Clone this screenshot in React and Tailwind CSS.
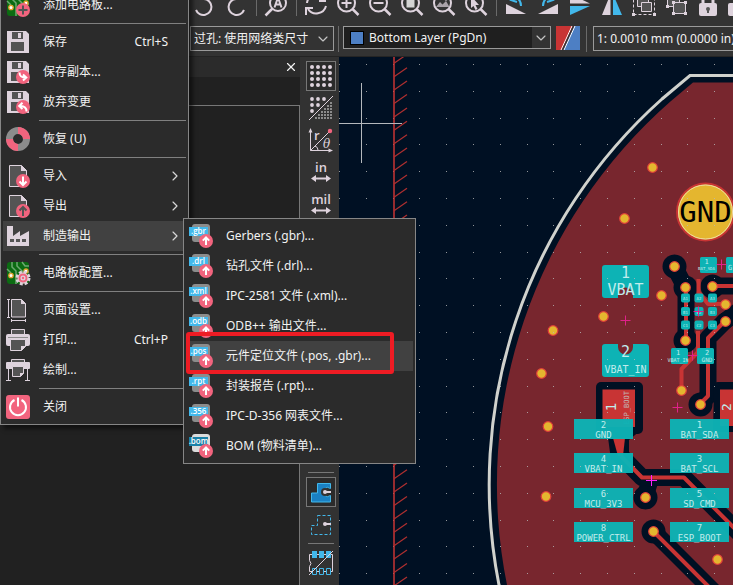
import { ChevronDown, ChevronRight, X } from "lucide-react";

const LIGHT = "#ded3dd";
const PINK = "#f2647e";
const BLUE = "#42b8eb";
const GREY = "#545454";

function Icon({ children }) {
  return (
    <svg width="24" height="24" viewBox="0 0 24 24" fill="none" className="shrink-0 overflow-visible" aria-hidden="true">
      {children}
    </svg>
  );
}

/* ---------- menu icons ---------- */

function Badge({ kind }) {
  const paths = {
    plus: "M17 12.5v9M12.5 17h9",
    up: "M17 21v-7M13.8 16.6l3.2-3.2 3.2 3.2",
    saveAs: "M13.5 12.5c0 4 2 5 6.5 5M17 14.5l3.3 3-3.3 3",
    revert: "M20.5 21.5c0-4-2-5.5-6-5.5M16.5 12.7l-3.3 3.3 3.3 3",
  };
  return (
    <>
      <circle cx="17" cy="17" r="7" fill={PINK} />
      <path d={paths[kind]} stroke={kind === "plus" ? GREY : "#fff"} strokeWidth="2" />
    </>
  );
}

function BoardBase() {
  return (
    <>
      <rect x="1" y="1" width="22" height="22" rx="3" fill="#0b6b12" />
      <path d="M6 1v5l4 4v13M11 1v4l6 6h6M1 8l4 4M16 1l3 4h4" stroke="#6da871" strokeWidth="1.5" />
      <circle cx="5" cy="14.5" r="2.2" fill="#fff" stroke="#e0a22d" strokeWidth="1.3" />
      <circle cx="20" cy="10" r="2" fill="#fff" stroke="#e0a22d" strokeWidth="1.3" />
    </>
  );
}

function FloppyIcon({ badge }) {
  return (
    <Icon>
      <path d="M1 1h19l3 3v19H1z" fill={LIGHT} />
      <path d="M6 2h11v7H6z" fill={GREY} />
      <path d="M12 3h3v5h-3z" fill={LIGHT} />
      <path d="M5 12h13v9H5z" fill={GREY} />
      {badge && <Badge kind={badge} />}
    </Icon>
  );
}

function PageIcon({ up }) {
  return (
    <Icon>
      <path d="M3.5 1.5h12l5 5v16h-17z" fill={GREY} stroke={LIGHT} />
      <path d="M15 1v6h6z" fill={LIGHT} />
      <circle cx="17" cy="17" r="7" fill={PINK} />
      <path
        d={up ? "M17 22v-8M13.5 16.5l3.5-3.5 3.5 3.5" : "M17 12.5v8M13.5 17.5l3.5 3.5 3.5-3.5"}
        stroke={up ? GREY : "#fff"}
        strokeWidth="2"
      />
    </Icon>
  );
}

const AddBoardIcon = () => (
  <Icon>
    <BoardBase />
    <Badge kind="plus" />
  </Icon>
);

const LifebuoyIcon = () => (
  <Icon>
    <circle cx="12" cy="12" r="8.5" stroke="#8c8c8c" strokeWidth="7" />
    <path d="M12 3.5a8.5 8.5 0 0 1 8.5 8.5M12 20.5a8.5 8.5 0 0 1-8.5-8.5" stroke={PINK} strokeWidth="7" />
  </Icon>
);

const FactoryIcon = () => (
  <Icon>
    <path d="M1 2h6v10l7-5v5l9-5v15H1z" fill={LIGHT} />
    <path d="M4 15h4v3H4zM10 15h4v3h-4zM16 15h4v3h-4z" fill={GREY} />
  </Icon>
);

const BoardSetupIcon = () => (
  <Icon>
    <BoardBase />
    <circle cx="17" cy="17" r="5.5" fill={PINK} stroke={LIGHT} strokeWidth="4" strokeDasharray="2.6 1.72" />
    <circle cx="17" cy="17" r="5" fill={PINK} stroke={LIGHT} />
    <circle cx="17" cy="17" r="2.5" fill={LIGHT} />
    <circle cx="17" cy="17" r="1.2" fill={PINK} />
  </Icon>
);

const PageSetupIcon = () => (
  <Icon>
    <path d="M5.5 1.5h10l4 4v13.5h-14z" fill={GREY} stroke={LIGHT} />
    <path d="M15 1v5h5z" fill={LIGHT} />
    <path d="M2.5 1.5v18M1 1.5h3M1 19.5h3M5.5 22.5h14M5.5 21v3M19.5 21v3" stroke={LIGHT} />
  </Icon>
);

const PrintIcon = () => (
  <Icon>
    <path d="M5.5 1.5h13v5h-13z" fill={GREY} stroke={LIGHT} />
    <rect y="6" width="24" height="12" rx="2" fill={LIGHT} />
    <path d="M2 9.5h20" stroke="#8c8c8c" />
    <path d="M4.5 11.5h15v7l-4 4h-11z" fill={GREY} stroke={LIGHT} />
    <path d="M15 23v-5h5z" fill={LIGHT} />
  </Icon>
);

const PlotIcon = () => (
  <Icon>
    <path d="M5.5 1.5h13v3h-13z" fill={GREY} stroke={LIGHT} />
    <rect y="4" width="24" height="7" rx="1" fill={LIGHT} />
    <path d="M2.5 11v11M21.5 11v11M0 22.5h5M19 22.5h5" stroke={LIGHT} />
    <path d="M6.5 8.5h11v7l-3 3h-8z" fill={GREY} stroke={LIGHT} />
    <path d="M14 19v-4h4z" fill={LIGHT} />
  </Icon>
);

const PowerIcon = () => (
  <Icon>
    <rect width="24" height="24" rx="3" fill={PINK} />
    <path d="M8.5 5A8 8 0 1 0 15.5 5M12 2.5v9" stroke="#fff" strokeWidth="2" />
  </Icon>
);

function FileTypeIcon({ ext, bom }) {
  return (
    <Icon>
      <rect x="3" width="18" height="18" rx="3" fill={bom ? "#dcdcdc" : "#8c8c8c"} />
      <rect y="3" width="19" height="9" fill={bom ? "#1a81a8" : BLUE} />
      <text x="9.5" y="10" textAnchor="middle" fill="#fff" fontSize="8" fontWeight="600" fontFamily="Open Sans, sans-serif">
        {ext}
      </text>
      <Badge kind="up" />
    </Icon>
  );
}

/* ---------- menus ---------- */

function MenuItem({ icon, label, shortcut, submenu, active, children }) {
  return (
    <li role="none" className="relative">
      <button
        type="button"
        role="menuitem"
        className={`flex h-[30px] w-full items-center gap-[13px] pl-[3px] text-left whitespace-nowrap ${
          active ? "bg-[#414141]" : ""
        }`}
      >
        {icon}
        <span className="flex-1">{label}</span>
        {shortcut && <span className="mr-[18px]">{shortcut}</span>}
        {submenu && <ChevronRight className="mr-[3px] size-4 text-[#d8d8d8]" strokeWidth={1.75} />}
      </button>
      {children}
    </li>
  );
}

const Separator = () => <li role="separator" className="my-[3px] ml-9 h-px bg-[#808080]" />;

function FileMenu() {
  return (
    <ul
      role="menu"
      aria-label="文件"
      className="absolute -top-[10px] left-0 w-[189px] border border-t-0 border-[#868686] bg-[#2b2b2b] px-[2px] pb-[2px] shadow-[4px_4px_4px_rgba(0,0,0,0.5)]"
    >
      <MenuItem icon={<AddBoardIcon />} label="添加电路板..." />
      <Separator />
      <MenuItem icon={<FloppyIcon />} label="保存" shortcut="Ctrl+S" />
      <MenuItem icon={<FloppyIcon badge="saveAs" />} label="保存副本..." />
      <MenuItem icon={<FloppyIcon badge="revert" />} label="放弃变更" />
      <Separator />
      <MenuItem icon={<LifebuoyIcon />} label="恢复 (U)" />
      <Separator />
      <MenuItem icon={<PageIcon />} label="导入" submenu />
      <MenuItem icon={<PageIcon up />} label="导出" submenu />
      <MenuItem icon={<FactoryIcon />} label="制造输出" submenu active />
      <Separator />
      <MenuItem icon={<BoardSetupIcon />} label="电路板配置..." />
      <Separator />
      <MenuItem icon={<PageSetupIcon />} label="页面设置..." />
      <MenuItem icon={<PrintIcon />} label="打印..." shortcut="Ctrl+P" />
      <MenuItem icon={<PlotIcon />} label="绘制..." />
      <Separator />
      <MenuItem icon={<PowerIcon />} label="关闭" />
    </ul>
  );
}

const OUTPUTS = [
  { ext: ".gbr", label: "Gerbers (.gbr)..." },
  { ext: ".drl", label: "钻孔文件 (.drl)..." },
  { ext: ".xml", label: "IPC-2581 文件 (.xml)..." },
  { ext: ".odb", label: "ODB++ 输出文件..." },
  { ext: ".pos", label: "元件定位文件 (.pos, .gbr)...", active: true },
  { ext: ".rpt", label: "封装报告 (.rpt)..." },
  { ext: ".356", label: "IPC-D-356 网表文件..." },
  { ext: ".bom", label: "BOM (物料清单)...", bom: true },
];

function OutputMenu() {
  return (
    <ul
      role="menu"
      aria-label="制造输出"
      className="absolute top-[218px] left-[183px] w-[233px] border border-[#868686] bg-[#2b2b2b] p-[2px]"
    >
      {OUTPUTS.map((o) => (
        <MenuItem key={o.ext} icon={<FileTypeIcon ext={o.ext} bom={o.bom} />} label={o.label} active={o.active}>
          {o.active && (
            <span className="pointer-events-none absolute -top-[9px] left-0 z-10 h-[42px] w-[208px] rounded-[3px] border-4 border-[#ee1c24]" />
          )}
        </MenuItem>
      ))}
    </ul>
  );
}

/* ---------- top toolbar ---------- */

function Lens({ children }) {
  return (
    <Icon>
      <circle cx="10.5" cy="11" r="8.5" stroke={LIGHT} strokeWidth="2" />
      <path d="M16.5 17l6 6" stroke={LIGHT} strokeWidth="2.5" />
      {children}
    </Icon>
  );
}

const TOOLS = [
  {
    name: "撤销",
    icon: (
      <Icon>
        <path d="M3 7h9a8 8 0 1 1-8 11" stroke={LIGHT} strokeWidth="2" />
      </Icon>
    ),
  },
  {
    name: "重做",
    icon: (
      <Icon>
        <path d="M21 7h-9a8 8 0 1 0 8 11" stroke={LIGHT} strokeWidth="2" />
      </Icon>
    ),
  },
  null,
  {
    name: "查找",
    icon: (
      <Icon>
        <circle cx="14" cy="11" r="8" stroke={LIGHT} strokeWidth="2" />
        <path d="M8.5 16.5l-7 7" stroke={LIGHT} strokeWidth="2.5" />
        <path d="M10.5 15.5l3.5-10 3.5 10M11.5 12.5h5" stroke={LIGHT} strokeWidth="2" />
      </Icon>
    ),
  },
  null,
  {
    name: "刷新",
    icon: (
      <Icon>
        <path d="M3 11a9 9 0 0 1 17-3M22 14a10 10 0 0 1-18 3" stroke={LIGHT} strokeWidth="2" />
        <path d="M21 3v6h-6M2 23v-7h7" stroke={LIGHT} strokeWidth="2" />
      </Icon>
    ),
  },
  {
    name: "放大",
    icon: (
      <Lens>
        <path d="M5.5 11h10M10.5 6v10" stroke={LIGHT} strokeWidth="2" />
      </Lens>
    ),
  },
  {
    name: "缩小",
    icon: (
      <Lens>
        <path d="M5.5 11h10" stroke={LIGHT} strokeWidth="2" />
      </Lens>
    ),
  },
  {
    name: "缩放适应",
    icon: (
      <Lens>
        <path d="M6.5 6h8v9.5h-8z" fill="#d4d4d4" />
      </Lens>
    ),
  },
  {
    name: "缩放到对象",
    icon: (
      <Lens>
        <path d="M4 15l4-5 2.5 2.5L14 9l3.5 6z" fill="#a9a2a8" />
        <circle cx="14" cy="7" r="1.5" fill={LIGHT} />
      </Lens>
    ),
  },
  {
    name: "缩放选区",
    icon: (
      <Lens>
        <path d="M7 4l8 9h-3.5l2 4-2 1-2-4L7 16z" fill={LIGHT} />
      </Lens>
    ),
  },
  null,
  {
    name: "逆时针旋转",
    icon: (
      <Icon>
        <path d="M2 12v10h20z" fill={LIGHT} />
        <path d="M8 7c5-3 9 1 9 7M11 3L7 8l6 2" stroke={BLUE} strokeWidth="2" />
      </Icon>
    ),
  },
  {
    name: "顺时针旋转",
    icon: (
      <Icon>
        <path d="M22 12v10H2z" fill={LIGHT} />
        <path d="M16 7c-5-3-9 1-9 7M13 3l4 5-6 2" stroke={BLUE} strokeWidth="2" />
      </Icon>
    ),
  },
  {
    name: "垂直镜像",
    icon: (
      <Icon>
        <path d="M2 2v9.5h20z" fill={LIGHT} />
        <path d="M2 14h20L2 23z" fill={BLUE} />
      </Icon>
    ),
  },
  {
    name: "水平镜像",
    icon: (
      <Icon>
        <path d="M10.5 2v21H2z" fill={LIGHT} />
        <path d="M13 2v21h9z" fill={BLUE} />
      </Icon>
    ),
  },
  {
    name: "编组",
    icon: (
      <Icon>
        <path d="M1.5 1.5h21v21h-21z" stroke={LIGHT} strokeDasharray="3 2" />
        <path d="M5.5 5.5h11v9h-11z" fill={GREY} stroke={LIGHT} />
        <path d="M9.5 10.5h10v9h-10z" fill={GREY} stroke={LIGHT} />
        <path d="M0 21h3v3H0zM21 21h3v3h-3z" fill={LIGHT} />
      </Icon>
    ),
  },
  {
    name: "取消编组",
    icon: (
      <Icon>
        <path d="M3.5 4.5h12v10h-12z" fill={GREY} stroke={LIGHT} />
        <path d="M9.5 10.5h12v11h-12z" fill={GREY} stroke={LIGHT} />
        <path d="M2 13h3v3H2zM8 9h3v3H8zM20 9h3v3h-3zM8 20h3v3H8zM20 20h3v3h-3z" fill={LIGHT} />
      </Icon>
    ),
  },
  {
    name: "锁定",
    icon: (
      <Icon>
        <path d="M7 12V7a5 5 0 0 1 10 0v5" stroke={LIGHT} strokeWidth="3" />
        <rect x="3" y="11" width="18" height="13" rx="2" fill={LIGHT} />
        <path d="M11 18h2v3h-2z" fill={GREY} />
        <circle cx="12" cy="17" r="2" fill={GREY} />
      </Icon>
    ),
  },
  {
    name: "解锁",
    icon: (
      <Icon>
        <path d="M7 8V5a5 5 0 0 1 10 0" stroke={LIGHT} strokeWidth="3" />
        <rect x="0" y="11" width="18" height="13" rx="2" fill={LIGHT} />
      </Icon>
    ),
  },
];

function MainToolbar() {
  return (
    <div role="toolbar" className="flex h-[22px] items-end overflow-hidden pb-[6px] pl-[188px]">
      {TOOLS.map((t, i) =>
        t ? (
          <button key={t.name} type="button" aria-label={t.name} className="flex w-8 shrink-0 justify-center">
            {t.icon}
          </button>
        ) : (
          <span key={i} className="flex h-6 w-2 shrink-0 justify-center">
            <span className="w-px bg-[#6a6a6a]" />
          </span>
        )
      )}
    </div>
  );
}

function OptionsBar() {
  return (
    <div className="flex h-[35px] shrink-0 items-start border-b border-[#242424] pt-1 pl-[190px]">
      <label className="relative flex h-[25px] w-36 shrink-0 items-center border border-[#9a9a9a]">
        <select aria-label="过孔尺寸" className="h-full w-full appearance-none bg-transparent pl-[3px] outline-none">
          <option>过孔: 使用网络类尺寸</option>
        </select>
        <ChevronDown className="pointer-events-none absolute right-0.5 size-4 text-[#c4c4c4]" strokeWidth={1.75} />
      </label>
      <span className="mx-1 h-[26px] w-px shrink-0 bg-[#6a6a6a]" />
      <label className="relative flex h-[23px] w-[208px] shrink-0 items-center border border-[#9a9a9a] bg-[#1f1f1f]">
        <span className="ml-1.5 size-3.5 shrink-0 border border-black bg-[#4d7fc4]" />
        <select aria-label="图层" className="h-full min-w-0 flex-1 appearance-none bg-transparent pl-[5px] outline-none">
          <option>Bottom Layer (PgDn)</option>
        </select>
        <span className="pointer-events-none flex h-full w-[18px] items-center justify-center bg-[#333333]">
          <ChevronDown className="size-4 text-[#c4c4c4]" strokeWidth={1.75} />
        </span>
      </label>
      <button type="button" aria-label="图层对" className="ml-[5px] shrink-0">
        <Icon>
          <path d="M0 0h24v24H0z" fill="#c83434" />
          <path d="M18 0h6v24H7z" fill="#4d7fc4" />
          <path d="M19 0L8 24M16 0L5 24" stroke="#fff" />
          <path d="M17.5 0l-11 24" stroke="#333" strokeWidth="1.5" />
        </Icon>
      </button>
      <span className="mx-1.5 h-[26px] w-px shrink-0 bg-[#6a6a6a]" />
      <label className="flex h-[25px] w-60 shrink-0 items-center border border-[#9a9a9a]">
        <select aria-label="网格" className="h-full w-full appearance-none bg-transparent pl-[3px] outline-none">
          <option>1: 0.0010 mm (0.0000 in)</option>
        </select>
      </label>
    </div>
  );
}

/* ---------- left tool strip ---------- */

function ToolButton({ name, on, children }) {
  return (
    <button
      type="button"
      aria-label={name}
      aria-pressed={!!on}
      className={`my-px flex size-[30px] shrink-0 items-center justify-center border ${
        on ? "border-[#777777] bg-[#2b2b2b]" : "border-transparent"
      }`}
    >
      {children}
    </button>
  );
}

function UnitIcon({ unit }) {
  return (
    <Icon>
      <text x="12" y="12" textAnchor="middle" fill={LIGHT} fontSize="13" fontWeight="600" fontFamily="Open Sans, sans-serif">
        {unit}
      </text>
      <path d="M5 18.5h14" stroke={LIGHT} strokeWidth="2" />
      <path d="M2 18.5l5-3.5v7zM22 18.5l-5-3.5v7z" fill={LIGHT} />
    </Icon>
  );
}

const range = (n) => Array.from({ length: n }, (_, i) => i);

function ToolStrip() {
  return (
    <div role="toolbar" className="flex w-[39px] shrink-0 flex-col items-center bg-[#323232] pt-[3px] pl-[3px]">
      <ToolButton name="显示网格" on>
        <Icon>
          {range(16).map((i) => (
            <circle key={i} cx={3 + (i % 4) * 6} cy={3 + Math.floor(i / 4) * 6} r="2" fill={LIGHT} />
          ))}
        </Icon>
      </ToolButton>
      <ToolButton name="网格覆盖">
        <Icon>
          {[[3, 3], [9, 3], [15, 3], [3, 9], [9, 9], [3, 15]].map(([x, y]) => (
            <circle key={`${x}-${y}`} cx={x} cy={y} r="1.9" fill={LIGHT} />
          ))}
          {range(6).flatMap((r) =>
            range(r + 1).map((c) => (
              <rect key={`${r}-${c}`} x={21 - c * 3} y={6 + r * 3} width="2" height="2" fill="#8c8c8c" />
            ))
          )}
          <path d="M0 24L24 0" stroke={LIGHT} />
        </Icon>
      </ToolButton>
      <ToolButton name="极坐标">
        <Icon>
          <path d="M1.5 3v19.5H22M1.5 22.5L20 4M6 18q3 1 3 4" stroke={LIGHT} />
          <path d="M1.5 0l2 4.5h-4zM24 22.5l-4.5-2v4z" fill={LIGHT} />
          <circle cx="21" cy="3" r="2.2" fill={PINK} />
          <text x="5" y="12" fill={LIGHT} fontSize="13" fontWeight="600" fontFamily="Open Sans, sans-serif">r</text>
          <text x="14" y="20" fill={LIGHT} fontSize="12" fontStyle="italic" fontFamily="DejaVu Serif, serif">θ</text>
        </Icon>
      </ToolButton>
      <ToolButton name="英寸">
        <UnitIcon unit="in" />
      </ToolButton>
      <ToolButton name="密耳">
        <UnitIcon unit="mil" />
      </ToolButton>
      <span className="mt-[252px] mb-[3px] h-px w-[26px] shrink-0 bg-[#777777]" />
      <ToolButton name="填充区域" on>
        <Icon>
          <path d="M8.5 3.5h13v5a4.5 4.5 0 1 0 0 7v6.5h-19v-9h6z" fill="#1a81c4" stroke={BLUE} />
          <circle cx="16" cy="12" r="4" fill="#333" />
          <path d="M16 12h6" stroke={LIGHT} strokeWidth="2" />
          <circle cx="16" cy="12" r="2" fill={LIGHT} />
        </Icon>
      </ToolButton>
      <ToolButton name="区域轮廓">
        <Icon>
          <path d="M8.5 3.5h13v19h-19v-9h6z" stroke={BLUE} strokeDasharray="3 2" />
          <path d="M16 12h6" stroke={LIGHT} strokeWidth="2" />
          <circle cx="16" cy="12" r="2" fill={LIGHT} />
        </Icon>
      </ToolButton>
      <span className="my-[3px] h-px w-[26px] shrink-0 bg-[#777777]" />
      <ToolButton name="焊盘轮廓">
        <Icon>
          <path d="M.5 3.5h23v17H.5v-5q3-3 0-6z" stroke={LIGHT} />
          <path d="M3 0h5v7H3zM10 0h5v7h-5zM17 0h5v7h-5z" fill={BLUE} />
          <path d="M3.5 17.5h4v6h-4zM10.5 17.5h4v6h-4zM17.5 17.5h4v6h-4z" fill="#323232" stroke={BLUE} />
          <path d="M0 24L24 0" stroke={LIGHT} />
        </Icon>
      </ToolButton>
    </div>
  );
}

/* ---------- board canvas ---------- */

const BG = "#001023";
const TEAL = "#0db3b5";
const COPPER = "#c83434";
const ZONE = "#78262e";

const GRID_DOTS = range(50)
  .flatMap((r) => range(60).map((c) => `M${Math.round(339 + c * 26.8)} ${Math.round(64 + r * 26.8)}h1v1h-1z`))
  .join("");

const VIAS = [
  [652.5, 167.5], [624.5, 218.5], [674.5, 266.5], [685.5, 287.5], [712.5, 286.5], [661.5, 295.5],
  [603.5, 316.5], [553, 330.5], [725.5, 304.5], [725.5, 321.5], [685.5, 340.5], [541.5, 373.5],
  [681.5, 390.5], [700.5, 404.5], [548, 426.5], [546, 496.5], [645.5, 497.5], [653.5, 531.5], [717.5, 559.5],
];

const CLEARED = [
  [674.5, 266.5], [685.5, 287.5], [712.5, 286.5], [685.5, 340.5], [700.5, 404.5], [645.5, 497.5], [653.5, 531.5],
];

const PADS = [
  [574, 419, 2, "GND"], [574, 453, 4, "VBAT_IN"], [574, 488, 6, "MCU_3V3"], [574, 522, 8, "POWER_CTRL"],
  [670, 419, 1, "BAT_SDA"], [670, 453, 3, "BAT_SCL"], [670, 488, 5, "SD_CMD"], [670, 522, 7, "ESP_BOOT"],
];

const TRACES = [
  "M686 287V340",
  "M712 286H740",
  "M725 321L708 338V396L700 404",
  "M621 456L642 477.5H684L740 534",
  "M653 531L712 590",
];

const CROSSES = [[625.5, 320.5], [677.5, 407.5], [721.5, 264.5], [692.5, 355.5], [698.5, 311.5]];

function Label({ x = 0, y = 0, size, children, ...rest }) {
  return (
    <text x={x} y={y} fontSize={size} textAnchor="middle" fill="#c0ecec" fontFamily="DejaVu Sans Mono, monospace" {...rest}>
      {children}
    </text>
  );
}

function Board() {
  return (
    <svg width="100%" height="100%" className="absolute inset-0" role="img" aria-label="PCB">
      <g transform="translate(-339 -57)">
        {/* board edge and copper zone */}
        <path d="M760 82.5H693L671 101A509 509 0 0 0 507 585V620H760z" fill={ZONE} />
        <path d="M760 75.5H690L662 99A517 517 0 0 0 499 585L510 620" fill="none" stroke="#d0d2cd" strokeWidth="3" />

        {/* clearances */}
        <g stroke={BG} strokeWidth="17" strokeLinejoin="round" strokeLinecap="round" fill="none">
          {TRACES.map((d) => (
            <path key={d} d={d} />
          ))}
          <path d="M674 266L685 287M645 497L650 480M740 310L725 321" />
        </g>
        <g fill={BG}>
          {CLEARED.map(([x, y]) => (
            <circle key={`${x}-${y}`} cx={x} cy={y} r="12" />
          ))}
          <rect x="596" y="382" width="47" height="52" rx="5" />
          <path d="M607 430h34l-12 10v18l-18 2z" />
          <path d="M714 386q0-4 4-4h22v50h-27z" />
        </g>

        {/* tracks */}
        <g stroke={COPPER} strokeWidth="4" strokeLinejoin="round" fill="none">
          {TRACES.map((d) => (
            <path key={d} d={d} />
          ))}
          <path d="M698.5 279V292L708 304H725M698 331V352L681.5 369V390" />
        </g>
        <path d="M613 438h12l-2 18h-5z" fill={COPPER} />
        <path d="M602.5 389.5H635V427H602.500zM720 389.5h20V426h-20z" fill={COPPER} />
        <Label size="14" transform="translate(616 407) rotate(-90)">1</Label>
        <Label size="7" transform="translate(629 408) rotate(-90)" opacity="0.7">ESP_BOOT</Label>
        <Label size="13" transform="translate(731 407) rotate(-90)">2</Label>

        {/* battery pads */}
        <g fill={TEAL}>
          <path d="M605 265h41q3 0 3 3v27q0 3-3 3h-13v-3a7.500 7.500 0 0 0-15 0v3h-13q-3 0-3-3v-27q0-3 3-3z" />
          <path d="M605 344h13v3a7.500 7.500 0 0 0 15 0v-3h13q3 0 3 3v27q0 3-3 3h-41q-3 0-3-3v-27q0-3 3-3z" />
        </g>
        <Label x="625.5" y="278" size="15">1</Label>
        <Label x="625.5" y="295" size="15">VBAT</Label>
        <Label x="625.5" y="357" size="15">2</Label>
        <Label x="625.5" y="373" size="10">VBAT_IN</Label>

        {/* header pads */}
        {PADS.map(([x, y, n, net]) => (
          <g key={n}>
            <rect x={x} y={y} width="59" height="20" fill={TEAL} opacity="0.97" />
            <Label x={x + 29.5} y={y + 9} size="9">{n}</Label>
            <Label x={x + 29.5} y={y + 19} size="9">{net}</Label>
          </g>
        ))}

        {/* small parts */}
        <g fill={TEAL}>
          {[[700, 257], [726, 257], [671, 348], [697, 348]].map(([x, y]) => (
            <rect key={`${x}-${y}`} x={x} y={y} width="17" height="16" rx="1.5" />
          ))}
          {range(9).map((i) => (
            <rect key={i} x={681 + (i % 3) * 13.5} y={293.5 + Math.floor(i / 3) * 13.5} width="9" height="9" rx="2" />
          ))}
        </g>
        {range(9).map((i) => (
          <Label key={i} x={685.5 + (i % 3) * 13.5} y={300 + Math.floor(i / 3) * 13.5} size="4">
            {["A", "B", "C"][Math.floor(i / 3)] + ((i % 3) + 1)}
          </Label>
        ))}
        <Label x="706.5" y="264" size="7">1</Label>
        <Label x="706.5" y="270" size="4">BAT_SDA</Label>
        <Label x="730" y="270" size="7">G</Label>
        <Label x="678" y="355" size="7">1</Label>
        <Label x="678" y="362" size="5">VBAT_IN</Label>
        <Label x="707" y="355" size="7">2</Label>
        <Label x="707" y="362" size="6">GND</Label>

        {VIAS.map(([x, y]) => (
          <circle key={`${x}-${y}`} cx={x} cy={y} r="4.8" fill="#e4b62f" stroke="#e0403a" strokeWidth="1.2" />
        ))}
        <circle cx="705.5" cy="212" r="28.5" fill="#e4b62f" stroke={COPPER} strokeWidth="2" />
        <circle cx="705.5" cy="212" r="27" fill="none" stroke="#eedca4" strokeWidth="1" />
        <text x="705.5" y="222" fontSize="29" textAnchor="middle" fill="#000" fontFamily="DejaVu Sans Mono, monospace">
          GND
        </text>

        {CROSSES.map(([x, y]) => (
          <path key={`${x}-${y}`} d={`M${x - 5} ${y}h10M${x} ${y - 5}v10`} stroke="#e0218a" />
        ))}
        <path d="M646 480.5h11M651.5 475v11" stroke="#ff20ff" />

        <path d={GRID_DOTS} fill="#b8b8b8" opacity="0.8" />

        {/* sheet edge */}
        <path d="M394 57V2000" stroke="#c83434" strokeWidth="1.5" />
        {range(80).map((i) => (
          <path key={i} d={`M394 ${63.3 + i * 13.4}l13-9`} stroke="#b03030" strokeWidth="1.2" />
        ))}
        <path d="M361.5 83v80M339 123.5h63" stroke="#b4b8bc" />
      </g>
    </svg>
  );
}

export default function App() {
  return (
    <div
      lang="zh-CN"
      className="relative flex h-screen flex-col overflow-hidden bg-[#333333] font-['Noto_Sans','Noto_Sans_CJK_SC',sans-serif] text-xs text-[#f2f2f2]"
    >
      <MainToolbar />
      <OptionsBar />
      <div className="flex min-h-0 flex-1">
        <aside className="flex w-[300px] shrink-0 flex-col bg-[#212121]">
          <header className="flex h-5 shrink-0 items-center justify-end bg-[#2b2b2b] pr-0.5">
            <button type="button" aria-label="关闭面板">
              <X className="size-3.5" strokeWidth={2} />
            </button>
          </header>
          <div className="mt-7 flex-1 border-t border-r border-[#777777]" />
        </aside>
        <ToolStrip />
        <main className="relative min-w-0 flex-1 overflow-hidden bg-[#001023]">
          <Board />
        </main>
      </div>
      <FileMenu />
      <OutputMenu />
    </div>
  );
}
